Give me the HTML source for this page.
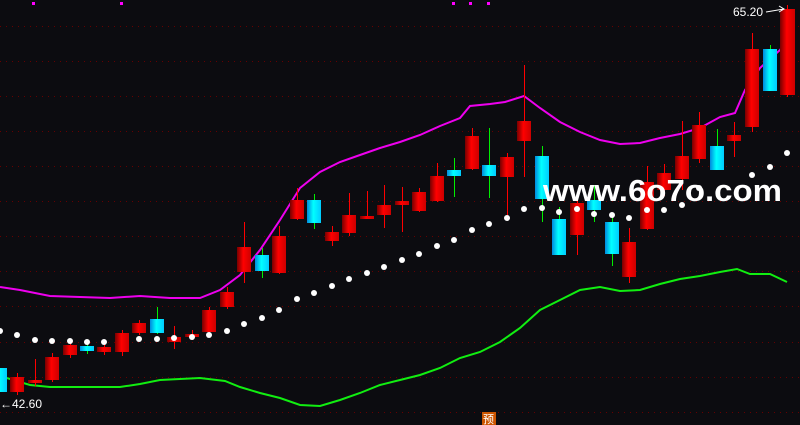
<!DOCTYPE html>
<html><head><meta charset="utf-8"><style>
html,body{margin:0;padding:0;background:#0c0c10;width:800px;height:425px;overflow:hidden}
svg{display:block}
</style></head><body>
<svg width="800" height="425" xmlns="http://www.w3.org/2000/svg">
<defs>
<linearGradient id="r" x1="0" x2="1" y1="0" y2="0"><stop offset="0" stop-color="#700"/><stop offset="0.45" stop-color="#f00"/><stop offset="1" stop-color="#c00"/></linearGradient>
<linearGradient id="c" x1="0" x2="1" y1="0" y2="0"><stop offset="0" stop-color="#08d"/><stop offset="0.45" stop-color="#0ff"/><stop offset="1" stop-color="#0cf"/></linearGradient>
</defs>
<rect width="800" height="425" fill="#0c0c10"/>
<g stroke="#600" stroke-dasharray="1 5" stroke-width="1">
<line x1="0" x2="800" y1="26.5" y2="26.5"/><line x1="0" x2="800" y1="61.5" y2="61.5"/><line x1="0" x2="800" y1="96.5" y2="96.5"/><line x1="0" x2="800" y1="131.5" y2="131.5"/><line x1="0" x2="800" y1="166.5" y2="166.5"/><line x1="0" x2="800" y1="201.5" y2="201.5"/><line x1="0" x2="800" y1="236.5" y2="236.5"/><line x1="0" x2="800" y1="271.5" y2="271.5"/><line x1="0" x2="800" y1="306.5" y2="306.5"/><line x1="0" x2="800" y1="342.5" y2="342.5"/><line x1="0" x2="800" y1="377.5" y2="377.5"/><line x1="0" x2="800" y1="412.5" y2="412.5"/>
</g>
<g fill="#f0f">
<rect x="32" y="2" width="3" height="3"/><rect x="120" y="2" width="3" height="3"/><rect x="452" y="2" width="3" height="3"/><rect x="469" y="2" width="3" height="3"/><rect x="487" y="2" width="3" height="3"/>
</g>
<polyline fill="none" stroke="#e0e" stroke-width="2" points="0,287 20,290 50,296 80,297 110,298 140,296 170,298 200,298 220,290 240,275 260,250 280,220 300,188 320,172 340,162 360,155 380,148 400,142 420,135 440,126 460,118 470,106 490,104 505,102 524,96 540,108 560,122 580,132 600,140 620,144 640,143 660,138 680,134 700,128 720,117 735,113 745,90 760,68 780,50 790,35"/>
<polyline fill="none" stroke="#1e1" stroke-width="2" points="0,376 30,385 50,387 120,387 140,384 160,380 200,378 225,381 240,387 260,393 280,398 300,405 320,406 340,400 360,393 380,385 400,380 420,375 440,368 460,358 480,352 500,342 520,328 540,310 560,300 580,290 600,287 620,291 640,290 660,284 680,279 700,276 720,272 737,269 750,274 770,274 787,282"/>
<g stroke-width="1">
<!-- wicks -->
<g stroke="#f00">
<line x1="17.5" x2="17.5" y1="373" y2="395"/><line x1="35.5" x2="35.5" y1="359" y2="386"/><line x1="52.5" x2="52.5" y1="353" y2="382"/><line x1="70.5" x2="70.5" y1="343" y2="358"/><line x1="104.5" x2="104.5" y1="344" y2="355"/><line x1="122.5" x2="122.5" y1="330" y2="356"/><line x1="139.5" x2="139.5" y1="320" y2="335"/><line x1="174.5" x2="174.5" y1="326" y2="349"/><line x1="192.5" x2="192.5" y1="330" y2="340"/><line x1="209.5" x2="209.5" y1="307" y2="333"/><line x1="227.5" x2="227.5" y1="287" y2="309"/><line x1="244.5" x2="244.5" y1="222" y2="283"/><line x1="279.5" x2="279.5" y1="226" y2="274"/><line x1="297.5" x2="297.5" y1="188" y2="220"/><line x1="332.5" x2="332.5" y1="226" y2="246"/><line x1="349.5" x2="349.5" y1="193" y2="236"/><line x1="367.5" x2="367.5" y1="191" y2="219"/><line x1="384.5" x2="384.5" y1="185" y2="228"/><line x1="402.5" x2="402.5" y1="187" y2="232"/><line x1="419.5" x2="419.5" y1="188" y2="212"/><line x1="437.5" x2="437.5" y1="163" y2="202"/><line x1="472.5" x2="472.5" y1="128" y2="170"/><line x1="507.5" x2="507.5" y1="153" y2="218"/><line x1="524.5" x2="524.5" y1="65" y2="177"/><line x1="577.5" x2="577.5" y1="195" y2="255"/><line x1="629.5" x2="629.5" y1="228" y2="283"/><line x1="647.5" x2="647.5" y1="166" y2="230"/><line x1="664.5" x2="664.5" y1="164" y2="196"/><line x1="682.5" x2="682.5" y1="121" y2="190"/><line x1="699.5" x2="699.5" y1="112" y2="163"/><line x1="734.5" x2="734.5" y1="122" y2="157"/><line x1="752.5" x2="752.5" y1="33" y2="132"/><line x1="787.5" x2="787.5" y1="5" y2="97"/>
</g>
<g stroke="#0e0">
<line x1="87.5" x2="87.5" y1="340" y2="354"/><line x1="157.5" x2="157.5" y1="307" y2="334"/><line x1="262.5" x2="262.5" y1="248" y2="278"/><line x1="314.5" x2="314.5" y1="194" y2="229"/><line x1="454.5" x2="454.5" y1="158" y2="197"/><line x1="489.5" x2="489.5" y1="128" y2="198"/><line x1="542.5" x2="542.5" y1="146" y2="222"/><line x1="559.5" x2="559.5" y1="207" y2="255"/><line x1="594.5" x2="594.5" y1="185" y2="222"/><line x1="612.5" x2="612.5" y1="213" y2="266"/><line x1="717.5" x2="717.5" y1="129" y2="170"/><line x1="770.5" x2="770.5" y1="45" y2="91"/>
</g>
</g>
<g fill="url(#r)">
<rect x="10" y="377" width="14" height="15"/><rect x="28" y="380" width="14" height="3"/><rect x="45" y="357" width="14" height="23"/><rect x="63" y="345" width="14" height="10"/><rect x="97" y="347" width="14" height="5"/><rect x="115" y="333" width="14" height="19"/><rect x="132" y="323" width="14" height="10"/><rect x="167" y="337" width="14" height="5"/><rect x="185" y="334" width="14" height="3"/><rect x="202" y="310" width="14" height="22"/><rect x="220" y="292" width="14" height="15"/><rect x="237" y="247" width="14" height="25"/><rect x="272" y="236" width="14" height="37"/><rect x="290" y="200" width="14" height="19"/><rect x="325" y="232" width="14" height="9"/><rect x="342" y="215" width="14" height="18"/><rect x="360" y="216" width="14" height="3"/><rect x="377" y="205" width="14" height="10"/><rect x="395" y="201" width="14" height="4"/><rect x="412" y="192" width="14" height="19"/><rect x="430" y="176" width="14" height="25"/><rect x="465" y="136" width="14" height="33"/><rect x="500" y="157" width="14" height="20"/><rect x="517" y="121" width="14" height="20"/><rect x="570" y="203" width="14" height="32"/><rect x="622" y="242" width="14" height="35"/><rect x="640" y="182" width="14" height="47"/><rect x="657" y="173" width="14" height="17"/><rect x="675" y="156" width="14" height="23"/><rect x="692" y="125" width="14" height="34"/><rect x="727" y="135" width="14" height="6"/><rect x="745" y="49" width="14" height="78"/><rect x="780" y="9" width="15" height="86"/>
</g>
<g fill="url(#c)">
<rect x="-7" y="368" width="14" height="24"/><rect x="80" y="346" width="14" height="5"/><rect x="150" y="319" width="14" height="14"/><rect x="255" y="255" width="14" height="16"/><rect x="307" y="200" width="14" height="23"/><rect x="447" y="170" width="14" height="6"/><rect x="482" y="165" width="14" height="11"/><rect x="535" y="156" width="14" height="43"/><rect x="552" y="219" width="14" height="36"/><rect x="587" y="200" width="14" height="10"/><rect x="605" y="222" width="14" height="32"/><rect x="710" y="146" width="14" height="24"/><rect x="763" y="49" width="14" height="42"/>
</g>
<g fill="#fff">
<circle cx="0" cy="331" r="3"/><circle cx="17" cy="335" r="3"/><circle cx="35" cy="340" r="3"/><circle cx="52" cy="341" r="3"/><circle cx="70" cy="341" r="3"/><circle cx="87" cy="342" r="3"/><circle cx="104" cy="342" r="3"/><circle cx="139" cy="339" r="3"/><circle cx="157" cy="339" r="3"/><circle cx="174" cy="338" r="3"/><circle cx="192" cy="337" r="3"/><circle cx="209" cy="335" r="3"/><circle cx="227" cy="331" r="3"/><circle cx="244" cy="324" r="3"/><circle cx="262" cy="318" r="3"/><circle cx="279" cy="310" r="3"/><circle cx="297" cy="299" r="3"/><circle cx="314" cy="293" r="3"/><circle cx="332" cy="286" r="3"/><circle cx="349" cy="279" r="3"/><circle cx="367" cy="273" r="3"/><circle cx="384" cy="267" r="3"/><circle cx="402" cy="260" r="3"/><circle cx="419" cy="254" r="3"/><circle cx="437" cy="246" r="3"/><circle cx="454" cy="240" r="3"/><circle cx="472" cy="230" r="3"/><circle cx="489" cy="224" r="3"/><circle cx="507" cy="218" r="3"/><circle cx="524" cy="209" r="3"/><circle cx="542" cy="208" r="3"/><circle cx="559" cy="212" r="3"/><circle cx="577" cy="209" r="3"/><circle cx="594" cy="214" r="3"/><circle cx="612" cy="215" r="3"/><circle cx="629" cy="218" r="3"/><circle cx="647" cy="210" r="3"/><circle cx="664" cy="210" r="3"/><circle cx="682" cy="205" r="3"/><circle cx="699" cy="188" r="3"/><circle cx="752" cy="175" r="3"/><circle cx="770" cy="167" r="3"/><circle cx="787" cy="153" r="3"/>
</g>
<text x="543" y="201" font-family="Liberation Sans, sans-serif" font-weight="bold" font-size="31" fill="#fff" textLength="239" lengthAdjust="spacingAndGlyphs">www.6o7o.com</text>
<text x="733" y="16" font-family="Liberation Sans, sans-serif" font-size="12" fill="#fff">65.20</text>
<polyline points="766,12 784,9 779,6 784,9 779,12" fill="none" stroke="#fff" stroke-width="1"/>
<text x="0" y="408" font-family="Liberation Sans, sans-serif" font-size="12" fill="#fff">←42.60</text>
<rect x="482" y="412" width="14" height="13" fill="#c50"/>
<text x="483" y="423" font-family="Liberation Sans, Noto Sans CJK SC, sans-serif" font-size="11" fill="#fff">预</text>
</svg>
</body></html>
